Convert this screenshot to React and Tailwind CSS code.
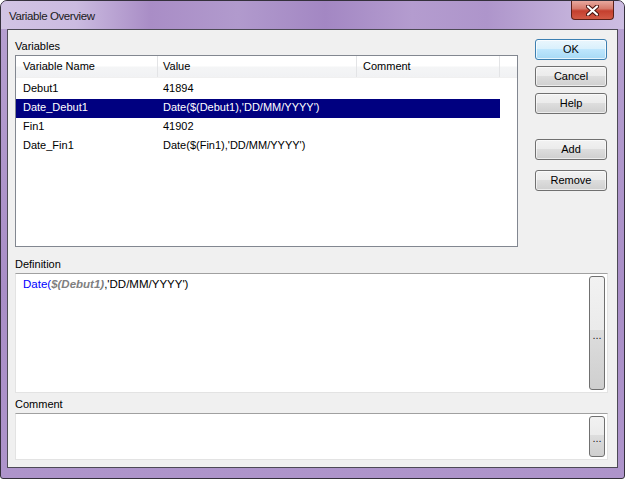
import React from 'react';

const FONT = "font-['Liberation_Sans',Arial,sans-serif]";

const rows = [
  { name: 'Debut1', value: '41894' },
  { name: 'Date_Debut1', value: "Date($(Debut1),'DD/MM/YYYY')", selected: true },
  { name: 'Fin1', value: '41902' },
  { name: 'Date_Fin1', value: "Date($(Fin1),'DD/MM/YYYY')" },
];

function Button({ children, primary, className = '' }) {
  const look = primary
    ? 'border-[#3c7fb1] bg-[linear-gradient(to_bottom,#eaf6fd_0%,#d9f0fc_48%,#bee6fd_50%,#a7d9f5_100%)] shadow-[inset_0_0_0_1px_rgba(255,255,255,0.7)]'
    : 'border-[#707070] bg-[linear-gradient(to_bottom,#f2f2f2_0%,#ebebeb_48%,#dddddd_50%,#cfcfcf_100%)] shadow-[inset_0_0_0_1px_rgba(255,255,255,0.6)]';
  return (
    <div
      className={`w-[72px] h-[21px] rounded-[3px] border flex items-center justify-center text-[11px] text-black ${look} ${className}`}
    >
      {children}
    </div>
  );
}

function DotsButton({ className = '' }) {
  return (
    <div
      className={`w-[16px] rounded-[3px] border border-[#707070] flex items-center justify-center bg-[linear-gradient(to_bottom,#f2f2f2_0%,#ebebeb_47%,#dddddd_47%,#cfcfcf_100%)] text-[11px] leading-none text-[#222] ${className}`}
    >
      <span className="pt-[4px]">...</span>
    </div>
  );
}

function CloseGlyph() {
  return (
    <svg width="13" height="11" viewBox="0 0 13 11">
      <path d="M2 1.5 L11 9.5 M11 1.5 L2 9.5" stroke="#4a1410" strokeWidth="4.2" strokeLinecap="round" />
      <path d="M2 1.5 L11 9.5 M11 1.5 L2 9.5" stroke="#ffffff" strokeWidth="2.2" strokeLinecap="round" />
    </svg>
  );
}

export default function App() {
  return (
    <div className={`w-[625px] h-[479px] bg-white ${FONT}`}>
      <div className="w-[625px] h-[479px] rounded-t-[7px] rounded-b-[3px] border border-[#34303c] bg-[linear-gradient(to_bottom,#b7a1d1_0%,#a98ec7_60%,#ae94cb_100%)] flex flex-col px-[6px] pb-[10px]">
        {/* title bar */}
        <div className="h-[28px] -mx-[6px] px-[6px] rounded-t-[6px] flex items-start bg-[linear-gradient(to_right,#d2c4e4_0%,#cbbbe0_12%,#a98dc6_24%,#b19acd_38%,#a387c3_52%,#b49ccf_66%,#ae95cb_78%,#c4b2db_92%,#cdbde2_100%)]">
          <div className="pl-[2px] pt-[8px] text-[11.5px] leading-[14px] text-[#1a1a1a] tracking-[-0.4px]">
            Variable Overview
          </div>
          <div className="ml-auto mr-[4px] w-[43px] h-[19px] rounded-b-[4px] border border-t-0 border-[#5a2018] flex items-center justify-center bg-[linear-gradient(to_bottom,#e8a89e_0%,#d67a6c_42%,#c43f2e_55%,#d25a46_100%)]">
            <CloseGlyph />
          </div>
        </div>

        {/* client area */}
        <div className="flex-1 border border-[#4d4a56] bg-[#f0f0f0] flex flex-col pl-[7px] pt-[8px] text-black">
          <div className="flex">
            <div className="flex flex-col">
              <div className="h-[17px] leading-[17px] text-[11px]">Variables</div>
              <div className="w-[503px] h-[192px] border border-[#828790] bg-white flex flex-col">
                <div className="h-[22px] flex text-[11px] bg-[linear-gradient(to_bottom,#ffffff_0%,#ffffff_45%,#f4f5f6_55%,#f1f2f4_100%)] border-b border-[#f0f0f0]">
                  <div className="w-[142px] border-r border-[#e3e4e6] pl-[7px] flex items-center">Variable Name</div>
                  <div className="w-[199px] border-r border-[#e3e4e6] pl-[5px] flex items-center">Value</div>
                  <div className="w-[143px] border-r border-[#e3e4e6] pl-[6px] flex items-center">Comment</div>
                  <div className="flex-1" />
                </div>
                <div className="pt-[2px] flex flex-col">
                  {rows.map((r) => (
                    <div
                      key={r.name}
                      className={`w-[484px] h-[19px] flex text-[11px] leading-[17px] ${
                        r.selected ? 'bg-[#000080] text-white' : 'text-black'
                      }`}
                    >
                      <div className="w-[142px] pl-[7px]">{r.name}</div>
                      <div className="w-[199px] pl-[5px]">{r.value}</div>
                      <div className="w-[143px]" />
                    </div>
                  ))}
                </div>
              </div>
            </div>
            <div className="ml-[17px] mt-[1px] flex flex-col">
              <Button primary>OK</Button>
              <Button className="mt-[6px]">Cancel</Button>
              <Button className="mt-[6px]">Help</Button>
              <Button className="mt-[25px]">Add</Button>
              <Button className="mt-[10px]">Remove</Button>
            </div>
          </div>

          <div className="mt-[8px] h-[18px] leading-[18px] text-[11px]">Definition</div>
          <div className="w-[593px] h-[120px] bg-white border border-[#e3e3e3] border-t-[#a0a0a0] flex">
            <div className="flex-1 pl-[7px] pt-[2px] text-[11.5px] leading-[16px]">
              <span className="text-[#0000ff]">Date(</span>
              <span className="text-[#808080] font-bold italic">$(Debut1)</span>
              <span className="text-black">,'DD/MM/YYYY')</span>
            </div>
            <DotsButton className="my-[2px] mr-[2px]" />
          </div>

          <div className="mt-[3px] h-[17px] leading-[17px] text-[11px]">Comment</div>
          <div className="w-[593px] h-[47px] bg-white border border-[#e3e3e3] border-t-[#a0a0a0] flex">
            <div className="flex-1" />
            <DotsButton className="my-[2px] mr-[2px]" />
          </div>
        </div>
      </div>
    </div>
  );
}
